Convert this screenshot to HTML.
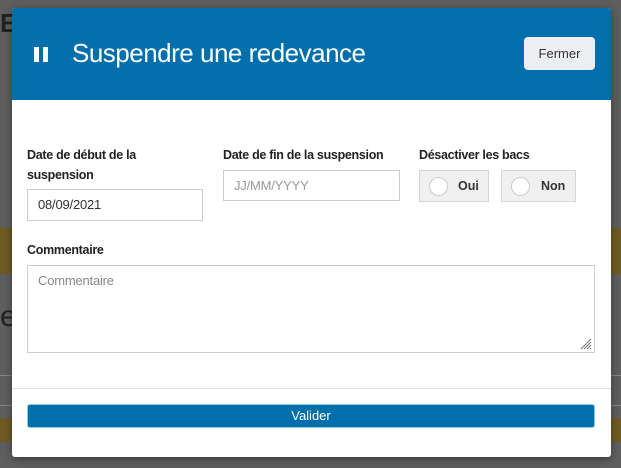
<!DOCTYPE html>
<html><head><meta charset="utf-8"><style>
*{box-sizing:border-box;margin:0;padding:0}
body{width:621px;height:468px;overflow:hidden;background:#5e5e5e;font-family:"Liberation Sans",sans-serif;position:relative}
.abs{position:absolute}
.modal{left:12px;top:8px;width:599px;height:449px;background:#fff;border-radius:3px;overflow:hidden;box-shadow:0 2px 8px rgba(0,0,0,.4)}
.hdr{left:0;top:0;width:599px;height:92px;background:#006fac}
.lbl{font-size:12.5px;font-weight:bold;color:#222;letter-spacing:-0.3px;line-height:20px}
.inp{border:1px solid #ccc;background:#fff;font-size:13px;color:#333;padding-left:10px;letter-spacing:-0.2px}
.rad{background:#f0f0f0;border:1px solid #d6d6d6;height:32px;font-size:12.5px;font-weight:bold;color:#333}
.circ{position:absolute;left:9px;top:6px;width:19px;height:19px;border-radius:50%;background:#fff;border:1px solid #ccc}
</style></head><body>
<div class="abs" style="left:0;top:228px;width:621px;height:46px;background:#6e5a22"></div>
<div class="abs" style="left:0;top:375px;width:621px;height:1px;background:#888"></div>
<div class="abs" style="left:0;top:405px;width:621px;height:1px;background:#888"></div>
<div class="abs" style="left:0;top:418px;width:621px;height:24px;background:#6e5a22"></div>
<div class="abs" style="left:0;top:300px;font-size:30px;color:#222">e</div>
<div class="abs" style="left:0;top:8px;font-size:26px;color:#222;font-weight:bold">EN</div>
<div class="abs modal">
 <div class="abs hdr">
  <div class="abs" style="left:22px;top:39px;width:5px;height:15px;background:#fff"></div>
  <div class="abs" style="left:31px;top:39px;width:5px;height:15px;background:#fff"></div>
  <div class="abs" style="left:60px;top:30px;font-size:26px;color:#fff;letter-spacing:-0.5px">Suspendre une redevance</div>
  <div class="abs" style="left:512px;top:29px;width:71px;height:33px;background:#eceef1;border-radius:4px;font-size:13px;color:#333;text-align:center;line-height:33px">Fermer</div>
 </div>
 <div class="abs lbl" style="left:15px;top:137px">Date de début de la<br>suspension</div>
 <div class="abs inp" style="left:15px;top:181px;width:176px;height:32px;line-height:30px">08/09/2021</div>
 <div class="abs lbl" style="left:211px;top:137px">Date de fin de la suspension</div>
 <div class="abs inp" style="left:211px;top:162px;width:177px;height:31px;line-height:29px;color:#999">JJ/MM/YYYY</div>
 <div class="abs lbl" style="left:407px;top:137px">Désactiver les bacs</div>
 <div class="abs rad" style="left:407px;top:162px;width:70px"><div class="circ"></div><span class="abs" style="left:38px;top:8px">Oui</span></div>
 <div class="abs rad" style="left:489px;top:162px;width:75px"><div class="circ"></div><span class="abs" style="left:39px;top:8px">Non</span></div>
 <div class="abs lbl" style="left:15px;top:232px">Commentaire</div>
 <div class="abs inp" style="left:15px;top:257px;width:568px;height:88px;padding-top:7px;color:#888">Commentaire
  <svg class="abs" style="right:2px;bottom:2px" width="14" height="14"><path d="M13 3L3 13M13 6L6 13M13 9L9 13M13 12L12 13" stroke="#777" stroke-width="1"/></svg>
 </div>
 <div class="abs" style="left:0;top:380px;width:599px;height:1px;background:#e2e2e2"></div>
 <div class="abs" style="left:15px;top:396px;width:568px;height:24px;background:#006fac;border:1px solid #8cc8ea;border-radius:3px;color:#fff;font-size:13px;text-align:center;line-height:22px">Valider</div>
</div>
</body></html>
